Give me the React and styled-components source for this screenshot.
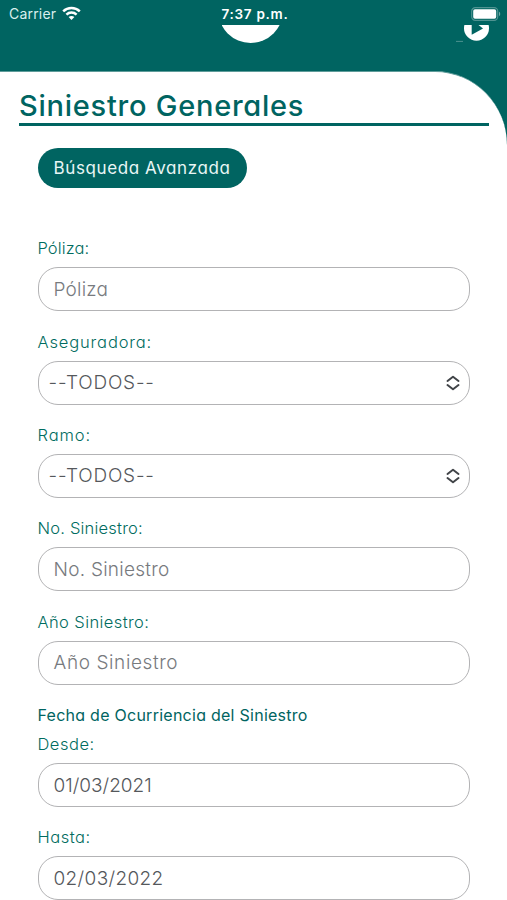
import React from 'react';
import styled, { createGlobalStyle } from 'styled-components';

const theme = {
    colorPrimary: '#006461',
    colorLabel: '#006c60',
    colorBorder: '#b3b3b5',
    colorText: '#55585c',
    colorPlaceholder: '#777a7e',
};

const GlobalStyle = createGlobalStyle`
    * {
        box-sizing: border-box;
    }
    body {
        margin: 0;
        background: ${theme.colorPrimary};
        font-family: Inter, 'Open Sans', sans-serif;
        font-feature-settings: 'cv11' 1;
    }
`;

const Screen = styled.div`
    width: 507px;
    height: 900px;
    display: flex;
    flex-direction: column;
    overflow: hidden;
    background: ${theme.colorPrimary};
`;
const StatusBar = styled.div`
    flex: none;
    height: 25px;
    padding: 2px 6px 0 9px;
    display: grid;
    grid-template-columns: 1fr auto 1fr;
    align-items: center;
    color: #fff;
    font-feature-settings: normal;
`;
const Carrier = styled.div`
    display: flex;
    align-items: center;
    gap: 6px;
    color: #d9efee;
    font-size: 14px;
    letter-spacing: 0.2px;
`;
const Clock = styled.div`
    font-size: 13.5px;
    font-weight: 600;
    letter-spacing: 0.7px;
`;
const Battery = styled.svg`
    justify-self: end;
`;
const Header = styled.header`
    flex: none;
    height: 46px;
    display: grid;
    grid-template-columns: 1fr 58px 1fr;
    align-items: start;
    padding: 0 17px 0 11px;
`;
const Logo = styled.svg`
    grid-column: 2;
    display: block;
`;
const PlayIcon = styled.svg`
    justify-self: end;
    display: block;
`;
const Panel = styled.main`
    flex: 1;
    padding: 18px 18px 0 19px;
    border-top: 1px solid #5f9c9a;
    border-top-right-radius: 72px 74px;
    background: #fff;
`;
const Title = styled.h1`
    height: 36px;
    margin: 0;
    border-bottom: 3px solid ${theme.colorPrimary};
    color: ${theme.colorPrimary};
    font-size: 29px;
    font-weight: 500;
    line-height: 32px;
    letter-spacing: 0.75px;
    white-space: nowrap;
`;
const Form = styled.form`
    padding: 22px 19px 0 18.5px;
    display: flex;
    flex-direction: column;
    align-items: stretch;
`;
const SearchButton = styled.button`
    align-self: flex-start;
    width: 209px;
    height: 40px;
    margin-bottom: 46.15px;
    padding: 0 0 1px;
    border: 0;
    border-radius: 20px;
    background: ${theme.colorPrimary};
    color: #e9f6f5;
    font: inherit;
    font-size: 17px;
    letter-spacing: 0.6px;
`;
const Field = styled.div`
    height: 93.4px;
    display: flex;
    flex-direction: column;
`;
const Label = styled.label`
    height: 33px;
    padding-top: 2px;
    color: ${theme.colorLabel};
    font-size: 16.5px;
    font-weight: 350;
    line-height: 25px;
    letter-spacing: ${props => props.$spacing || 0}px;
`;
const GroupTitle = styled.div`
    height: 29px;
    padding-top: 2px;
    color: ${theme.colorPrimary};
    font-size: 16px;
    font-weight: 400;
    line-height: 25px;
    letter-spacing: 0.26px;
    white-space: nowrap;
`;
const Control = styled.div`
    height: 44px;
    padding: 0 9px 0 ${props => (props.$select ? 10 : 15)}px;
    display: flex;
    align-items: center;
    justify-content: space-between;
    border: 1.5px solid ${theme.colorBorder};
    border-radius: 20px;
    color: ${props => (props.$placeholder ? theme.colorPlaceholder : theme.colorText)};
    font-size: 19px;
    font-weight: 300;
    letter-spacing: ${props => props.$spacing || 0}px;
`;

const SelectArrows = () => (
    <svg width="14" height="16" viewBox="0 0 14 16" fill="none" stroke="#414448" strokeWidth="2" strokeLinecap="round" strokeLinejoin="round">
        <path d="M1.5 6L7 1.8L12.5 6" />
        <path d="M1.5 10L7 14.2L12.5 10" />
    </svg>
);

const fields = [
    { label: 'Póliza:', value: 'Póliza', placeholder: true, labelSpacing: 0.1, spacing: 0.2 },
    { label: 'Aseguradora:', value: '--TODOS--', select: true, labelSpacing: 0.85, spacing: 0.8 },
    { label: 'Ramo:', value: '--TODOS--', select: true, labelSpacing: 0.9, spacing: 0.8 },
    { label: 'No. Siniestro:', value: 'No. Siniestro', placeholder: true, labelSpacing: 0.2, spacing: 0.25 },
    { label: 'Año Siniestro:', value: 'Año Siniestro', placeholder: true, labelSpacing: 0.4, spacing: 0.6 },
];
const dates = [
    { label: 'Desde:', value: '01/03/2021', labelSpacing: 0.5 },
    { label: 'Hasta:', value: '02/03/2022', labelSpacing: 0.5, spacing: 0.35 },
];

const FormField = ({ label, value, placeholder, select, labelSpacing, spacing }) => (
    <Field>
        <Label $spacing={labelSpacing}>{label}</Label>
        <Control $select={select} $placeholder={placeholder} $spacing={spacing}>
            <span>{value}</span>
            {select && <SelectArrows />}
        </Control>
    </Field>
);

const App = () => (
    <Screen>
        <GlobalStyle />
        <StatusBar>
            <Carrier>
                <span>Carrier</span>
                <svg width="19" height="15" viewBox="0 0 19 15" fill="none" stroke="#fff" strokeWidth="2.5">
                    <path d="M1.2 5.3C5.8 0.9 13.2 0.9 17.8 5.3" />
                    <path d="M4.4 8.6C7.3 5.9 11.7 5.9 14.6 8.6" />
                    <path d="M6.6 11C8.3 9.5 10.7 9.5 12.4 11L9.5 14Z" fill="#fff" stroke="none" />
                </svg>
            </Carrier>
            <Clock>7:37 p.m.</Clock>
            <Battery width="30" height="14" viewBox="0 0 30 14">
                <rect x="0.7" y="0.7" width="26" height="12.6" rx="3.6" fill="none" stroke="#4f9391" strokeWidth="1.2" />
                <rect x="2.2" y="2.2" width="23" height="9.6" rx="1.8" fill="#fff" />
                <path d="M28 4.8C29.6 5.4 29.6 8.6 28 9.2Z" fill="#6fa8a6" />
            </Battery>
        </StatusBar>
        <Header>
            <Logo width="58" height="18" viewBox="0 0 58 18">
                <circle cx="28.6" cy="-14.4" r="32.4" fill="#fff" />
            </Logo>
            <PlayIcon width="36" height="18" viewBox="0 0 36 18">
                <circle cx="22.5" cy="3.2" r="12.5" fill="#fff" />
                <path d="M17.7 -2V9.8L29 3.6L22 -2Z" fill={theme.colorPrimary} />
                <path d="M2 16.4H9" stroke="#4d9290" strokeWidth="1" />
            </PlayIcon>
        </Header>
        <Panel>
            <Title>Siniestro Generales</Title>
            <Form>
                <SearchButton type="button">Búsqueda Avanzada</SearchButton>
                {fields.map(obj => <FormField key={obj.label} {...obj} />)}
                <GroupTitle>Fecha de Ocurriencia del Siniestro</GroupTitle>
                {dates.map(obj => <FormField key={obj.label} {...obj} />)}
            </Form>
        </Panel>
    </Screen>
);

export default App;
